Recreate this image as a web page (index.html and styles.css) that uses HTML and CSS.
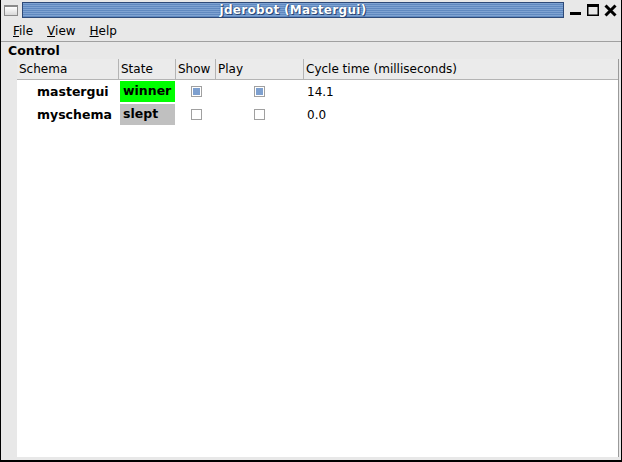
FILE: index.html
```html
<!DOCTYPE html>
<html lang="en">
<head>
  <meta charset="UTF-8" />
  <title>jderobot (Mastergui)</title>
  <link rel="stylesheet" href="styles.css">
</head>
<body>

<div class="window">
  <!-- Title bar -->
  <div class="titlebar">
    <div class="win-icon"></div>
    <div class="title">jderobot (Mastergui)</div>
    <div class="win-buttons">
      <svg width="12" height="12" viewBox="0 0 12 12"><rect x="0" y="8" width="11" height="3" fill="#000"/></svg>
      <svg width="12" height="12" viewBox="0 0 12 12"><rect x="0.75" y="0.75" width="10.5" height="10.5" fill="none" stroke="#000" stroke-width="1.5"/><rect x="0" y="0" width="12" height="3" fill="#000"/></svg>
      <svg width="13" height="13" viewBox="0 0 13 13"><path d="M1.5 1.5 L11.5 11.5 M11.5 1.5 L1.5 11.5" stroke="#000" stroke-width="3"/></svg>
    </div>
  </div>

  <!-- Menu -->
  <div class="menubar">
    <span><u>F</u>ile</span>
    <span><u>V</u>iew</span>
    <span><u>H</u>elp</span>
  </div>

  <div class="section-label">Control</div>

  <div class="panel">
    <div class="table">
      <div class="row head">
        <div class="c-schema">Schema</div>
        <div class="c-state">State</div>
        <div class="c-show">Show</div>
        <div class="c-play">Play</div>
        <div class="c-cycle">Cycle time (milliseconds)</div>
      </div>
      <div class="row">
        <div class="c-schema name">mastergui</div>
        <div class="c-state"><span class="state winner">winner</span></div>
        <div class="c-show"><span class="check on"></span></div>
        <div class="c-play"><span class="check on"></span></div>
        <div class="c-cycle">14.1</div>
      </div>
      <div class="row">
        <div class="c-schema name">myschema</div>
        <div class="c-state"><span class="state slept">slept</span></div>
        <div class="c-show"><span class="check"></span></div>
        <div class="c-play"><span class="check"></span></div>
        <div class="c-cycle">0.0</div>
      </div>
    </div>
  </div>
</div>

</body>
</html>
```

FILE: styles.css
```css
body {
  margin: 0;
  font-family: 'DejaVu Sans', sans-serif;
  font-size: 12px;
  color: #000;
  background: #e8e8e8;
}

.window {
  width: 622px;
  height: 462px;
  box-sizing: border-box;
  background: #e8e8e8;
  border-left: 1px solid #000;
  border-right: 1px solid #000;
  border-bottom: 2px solid #000;
  display: flex;
  flex-direction: column;
}

/* title bar */
.titlebar {
  height: 20px;
  display: flex;
  align-items: center;
  padding: 0 4px 0 3px;
}

.win-icon {
  width: 12px;
  height: 8px;
  border: 1px solid #8a8a8a;
  border-top-width: 2px;
  background: linear-gradient(#ffffff, #d8d8d8);
  margin-right: 4px;
}

.title {
  flex: 1;
  height: 14px;
  margin-top: -1px;
  border: 1px solid #2e4a78;
  background: repeating-linear-gradient(#7fa3d2 0px, #7fa3d2 1px, #6089c0 1px, #6089c0 2px);
  color: #fff;
  font-weight: bold;
  font-size: 12px;
  letter-spacing: 0.3px;
  line-height: 14px;
  text-align: center;
  text-shadow: 0 0 1px #1d3a66, 1px 1px 0 #2a4676;
}

.win-buttons {
  display: flex;
  align-items: center;
  gap: 5px;
  margin-left: 6px;
}

/* menu */
.menubar {
  height: 22px;
  display: flex;
  align-items: center;
  padding-left: 12px;
  font-size: 12px;
  border-bottom: 1px solid #a0a0a0;
  box-sizing: border-box;
}

.menubar span {
  margin-right: 14px;
}

.section-label {
  font-weight: bold;
  font-size: 12.5px;
  padding-left: 7px;
  height: 17px;
  line-height: 17px;
}

/* table */
.panel {
  flex: 1;
  display: flex;
  padding-left: 16px;
  padding-right: 2px;
  padding-bottom: 3px;
}

.table {
  flex: 1;
  background: #fff;
  border-right: 1px solid #9a9a9a;
}

.row {
  display: flex;
  height: 23px;
  align-items: center;
}

.row.head {
  height: 21px;
  background: #ebebeb;
  border-bottom: 1px solid #b4b4b4;
  align-items: stretch;
  box-sizing: border-box;
}

.row.head > div {
  border-right: 1px solid #b4b4b4;
  display: flex;
  align-items: center;
  padding-left: 2px;
  box-sizing: border-box;
}

.row.head > div:last-child {
  border-right: none;
}

.c-schema { width: 102px; }
.c-state { width: 57px; }
.c-show { width: 40px; }
.c-play { width: 88px; }
.c-cycle { flex: 1; }

.row > div { box-sizing: border-box; }

.name {
  font-weight: bold;
  font-size: 12.5px;
  padding-left: 20px;
}

.row .c-state {
  padding-left: 1px;
}

.state {
  display: block;
  width: 55px;
  height: 21px;
  line-height: 20px;
  padding-left: 3px;
  box-sizing: border-box;
  font-weight: bold;
  font-size: 12.5px;
}

.winner { background: #00ff00; }
.slept { background: #c0c0c0; }

.row .c-show { padding-left: 15px; }
.row .c-play { padding-left: 38px; }
.row .c-cycle { padding-left: 3px; }

.check {
  display: block;
  width: 11px;
  height: 11px;
  box-sizing: border-box;
  border: 1px solid #a0a0a0;
  background: #fff;
}

.check.on {
  background: #7ea0cf;
  box-shadow: inset 0 0 0 1px #fff;
}
```
